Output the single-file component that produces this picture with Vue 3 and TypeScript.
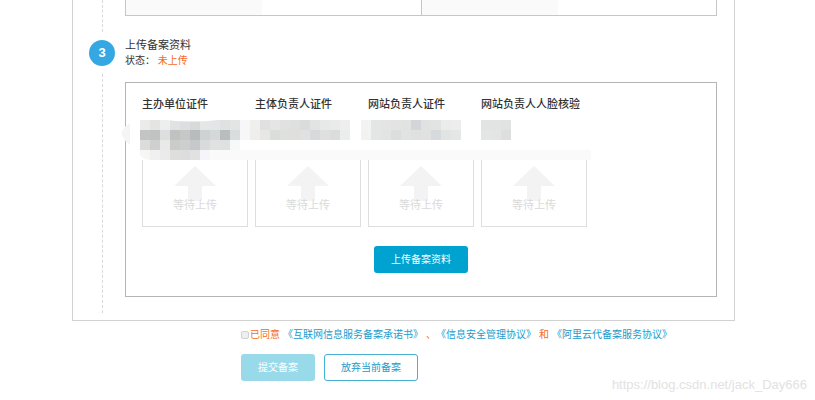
<script setup lang="ts">
interface Cell {
  x: number
  y: number
  fill: string
}

const uploads: string[] = ['主办单位证件', '主体负责人证件', '网站负责人证件', '网站负责人人脸核验']

// Each run is a row of 10px blocks: start x, y, then the block colours.
const runs: [number, number, string[]][] = [
  [10, 0, ['#ebebea', '#e4e4e3', '#edefef', '#dfe3e3', '#dcdfdf', '#d8dada', '#e4e7e8', '#e3e6e6', '#dfe2e2', '#e3e5e5']],
  [110, 0, ['#f7f7fa', '#f0efee', '#dfe0df', '#e5e5e4', '#e0e2e1', '#dee0df', '#d9dcdb', '#e2e3e3', '#e7e8e8', '#e9eaea', '#eeeeee']],
  [10, 10, ['#c3c5c4', '#c0c3c2', '#dcdfde', '#bfc2c1', '#c5c8c7', '#b9bcbc', '#cfd2d2', '#d5d8d8', '#b9bdbb', '#d9dddd']],
  [110, 10, ['#f7f7fa', '#efeeed', '#e7e7e6', '#dbdddd', '#dfdfde', '#dfdfde', '#e0e1e0', '#d7d9da', '#dee0e0', '#dadcde', '#ebecec']],
  [10, 20, ['#dcdcda', '#cfcfcf', '#e8eaea', '#cbccc7', '#cccfcf', '#c6c9c9', '#d8dadb', '#e0e1e1', '#dfe0e0', '#f7f8fa']],
  [10, 30, ['#f6f6f5', '#eff0ef', '#ebebea', '#dededd', '#dddddd', '#e1e1e1', '#f4f6f9', '#fafafa']],
  [231, 0, ['#f3f3f1', '#e4e5e5', '#e3e4e3', '#e2e4e4', '#e1e2e2', '#d3d6d8', '#e0e2e2', '#e2e4e4', '#eaebeb', '#ededed']],
  [231, 10, ['#f2f2f0', '#e4e5e5', '#e2e3e3', '#dcdede', '#e2e2e2', '#dfe1e1', '#e0e2e2', '#d7dadc', '#e2e3e3', '#e5e6e6']],
  [351, 0, ['#e2e3e3', '#e2e3e3', '#e1e2e2']],
  [351, 10, ['#e4e5e5', '#e3e4e4', '#dddfdf']],
]

const cells: Cell[] = runs.flatMap(([x, y, fills]) =>
  fills.map((fill, i) => ({ x: x + i * 10, y, fill })),
)
</script>

<template>
  <main class="page">
    <section class="panel">
      <div class="step previous">
        <div class="rail"><span class="line"></span></div>
        <div class="summary">
          <div class="cell"></div>
          <div class="cell"></div>
        </div>
      </div>

      <div class="step current">
        <div class="rail">
          <span class="number">3</span>
          <span class="line"></span>
        </div>
        <div class="body">
          <h2>上传备案资料</h2>
          <p class="status">状态： <span class="warn">未上传</span></p>
          <div class="box">
            <ul class="uploads">
              <li v-for="title in uploads" :key="title">
                <h3>{{ title }}</h3>
                <div class="slot">
                  <svg width="42" height="35" viewBox="0 0 42 35" aria-hidden="true">
                    <path d="M21 0 42 20H28V35H14V20H0Z" fill="#f3f3f3" />
                  </svg>
                  <span>等待上传</span>
                </div>
              </li>
            </ul>
            <svg class="mosaic" width="470" height="40" viewBox="0 0 470 40" aria-hidden="true">
              <rect x="10" y="30" width="451" height="10" fill="#fafafa" />
              <path d="M0 3Q-5 5-9 13Q-5 23 0 24Z" fill="#f5f5f5" />
              <rect
                v-for="cell in cells"
                :key="`${cell.x}-${cell.y}`"
                :x="cell.x"
                :y="cell.y"
                width="10"
                height="10"
                :fill="cell.fill"
                shape-rendering="crispEdges"
              />
              <path d="M36 0H88Q62 3 36 0Z" fill="#fff" />
              <path d="M10 35Q12 39 20 40H10Z" fill="#fff" />
            </svg>
            <button type="button" class="btn primary">上传备案资料</button>
          </div>
        </div>
      </div>
    </section>

    <footer class="footer">
      <div class="agreement">
        <input id="agree" type="checkbox" />
        <label for="agree">已同意</label>
        <a href="#commitment">《互联网信息服务备案承诺书》</a>
        <span class="mark">、</span>
        <a href="#security">《信息安全管理协议》</a>
        <span class="and">和</span>
        <a href="#service">《阿里云代备案服务协议》</a>
      </div>
      <div class="actions">
        <button type="button" class="btn submit" disabled>提交备案</button>
        <button type="button" class="btn outline">放弃当前备案</button>
      </div>
    </footer>

    <div class="watermark">https://blog.csdn.net/jack_Day666</div>
  </main>
</template>

<style>
body {
  margin: 0;
  background: #fff;
}
</style>

<style scoped>
.page {
  position: relative;
  box-sizing: border-box;
  min-height: 100vh;
  padding: 0 80px 0 72px;
  font-family: "Liberation Sans", "Noto Sans CJK SC", sans-serif;
  font-size: 10px;
  line-height: 16px;
  color: #333;
}
h2,
h3,
p,
ul {
  margin: 0;
  padding: 0;
}
.panel {
  padding: 0 17px 7px 16px;
  border: 1px solid #d2d2d2;
  border-top: 0;
}
.step {
  display: grid;
  grid-template-columns: 26px 1fr;
  column-gap: 10px;
}
.rail {
  display: flex;
  flex-direction: column;
  align-items: center;
  gap: 8px;
}
.line {
  flex: 1;
  border-left: 1px dashed #d9d9d9;
}
.previous {
  height: 32px;
}
.summary {
  display: grid;
  grid-template-columns: 1fr 1fr;
  height: 15px;
  border: 1px solid #c6c6c6;
  border-top: 0;
}
.cell {
  background: linear-gradient(to right, #fafafa 136px, #fff 136px);
}
.cell + .cell {
  border-left: 1px solid #c6c6c6;
}
.current {
  padding-top: 8px;
}
.number {
  width: 26px;
  height: 26px;
  border-radius: 50%;
  background: #35a8e4;
  color: #fff;
  font-size: 13px;
  font-weight: bold;
  line-height: 26px;
  text-align: center;
}
.body {
  margin-top: -3px;
  padding-bottom: 16px;
}
h2 {
  font-size: 11px;
  font-weight: normal;
}
.warn {
  color: #f56a1f;
}
.box {
  position: relative;
  display: flex;
  flex-direction: column;
  align-items: center;
  margin-top: 13px;
  padding: 13px 16px 23px;
  border: 1px solid #b5b5b5;
}
.uploads {
  display: flex;
  align-self: stretch;
  gap: 7px;
  list-style: none;
}
.uploads li {
  width: 106px;
}
h3 {
  font-size: 11px;
  font-weight: 500;
  color: #333;
  white-space: nowrap;
}
.slot {
  display: flex;
  flex-direction: column;
  align-items: center;
  box-sizing: border-box;
  height: 75px;
  margin-top: 40px;
  padding-top: 13px;
  border: 1px solid #dedede;
  color: #dadada;
  font-size: 11px;
}
.slot span {
  margin-top: -4px;
}
.mosaic {
  position: absolute;
  top: 37px;
  left: 4px;
  overflow: visible;
}
.btn {
  box-sizing: border-box;
  height: 27px;
  padding: 0 16px;
  border: 1px solid transparent;
  border-radius: 3px;
  font: inherit;
}
.primary {
  margin-top: 19px;
  background: #00a2d0;
  color: #fff;
}
.footer {
  padding: 6px 0 0 169px;
}
.agreement {
  display: flex;
  align-items: center;
  color: #f56a1f;
  white-space: nowrap;
}
.agreement input {
  appearance: none;
  width: 8px;
  height: 8px;
  margin: 0 1px 0 0;
  border: 1px solid #d2d2d2;
  border-radius: 2px;
  background: #eee;
}
.agreement a {
  color: #229bcb;
  text-decoration: none;
}
.agreement label {
  margin-right: 3px;
}
.mark {
  margin-left: 3px;
}
.and {
  margin: 0 3px;
}
.actions {
  display: flex;
  gap: 9px;
  margin-top: 11px;
}
.submit {
  background: #99daea;
  color: #fff;
}
.outline {
  border-color: #45b0cf;
  background: #fff;
  color: #229bcb;
}
.watermark {
  position: absolute;
  right: 8px;
  bottom: 7px;
  font-size: 13px;
  color: #e2e2e2;
}
</style>
